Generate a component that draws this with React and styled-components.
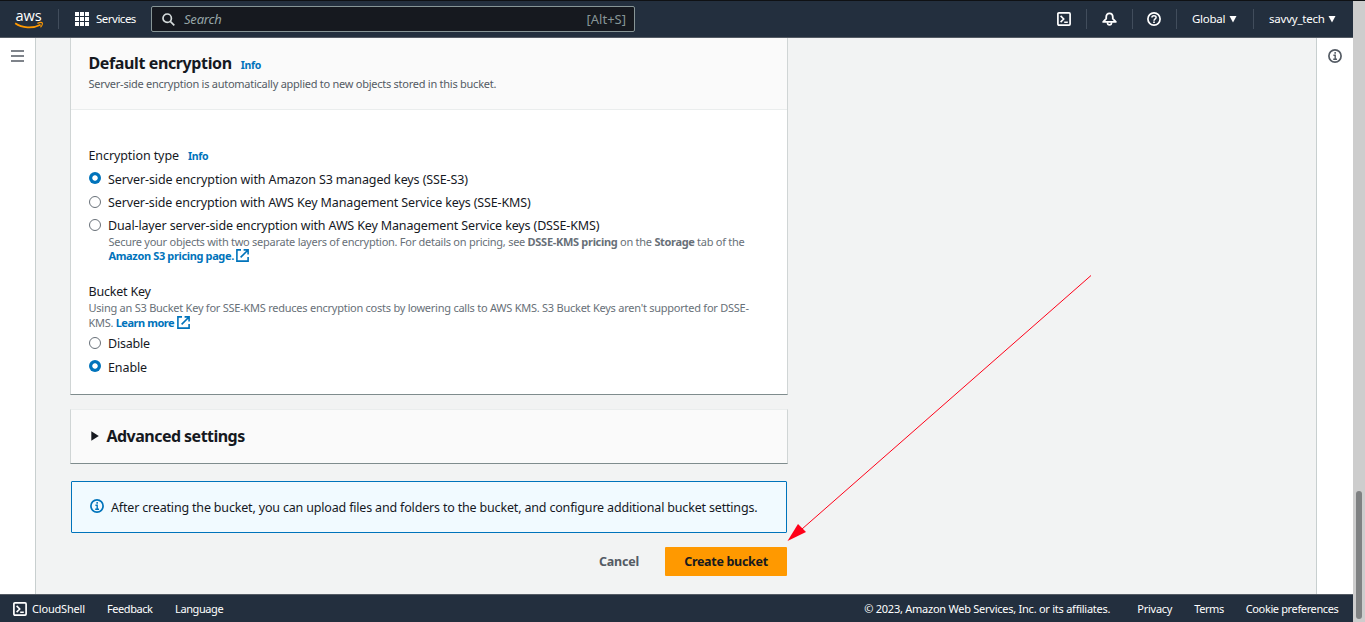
import React from "react";
import styled, { createGlobalStyle, css } from "styled-components";

const GlobalStyle = createGlobalStyle`
  *, *::before, *::after { box-sizing: border-box; }
  html, body { margin: 0; padding: 0; overflow: hidden; }
  body {
    font-family: "Noto Sans", "Open Sans", sans-serif;
    font-size: 12.5px;
    color: #16191f;
    background: #f2f3f3;
  }
  svg { display: block; flex: none; }
`;

const tracked = css`
  letter-spacing: ${(p) => p.$track || 0}px;
  white-space: nowrap;
`;

const Window = styled.div`
  position: relative;
  display: grid;
  grid-template-columns: 1353px 12px;
  width: 1365px;
  height: 622px;
  border-top: 1px solid #0f1114;
  overflow: hidden;
`;

const Page = styled.div`
  display: grid;
  grid-template-rows: 37px 556px 28px;
`;

const ScrollTrack = styled.div`
  display: flex;
  justify-content: center;
  align-items: flex-end;
  padding-bottom: 3px;
  background: #cdcdcd;
`;

const ScrollThumb = styled.div`
  width: 6px;
  height: 128px;
  border-radius: 3px;
  background: #7f8182;
`;

const TopBar = styled.header`
  display: flex;
  align-items: center;
  background: #232f3e;
  border-bottom: 1px solid #545b64;
  color: #fff;
`;

const LogoLink = styled.div`
  width: 58px;
  padding-left: 14px;
`;

const Divider = styled.div`
  width: 1px;
  height: 20px;
  background: #414d5c;
`;

const ServicesButton = styled.div`
  display: flex;
  align-items: center;
  gap: 7px;
  width: 92px;
  padding-left: 16px;
`;

const NavText = styled.span`
  ${tracked}
  font-size: 11.5px;
  line-height: 16px;
  color: #fff;
`;

const FooterText = styled(NavText)`
  font-size: 11px;
`;

const SearchBox = styled.div`
  display: flex;
  align-items: center;
  width: 484px;
  height: 26px;
  padding: 0 8px 0 10px;
  border: 1px solid #879596;
  border-radius: 2px;
  background: #16191f;
  color: #95a5a6;
`;

const SearchHint = styled.span`
  ${tracked}
  flex: 1;
  padding-left: 9px;
  font-style: italic;
  font-size: 13px;
`;

const Shortcut = styled.span`
  ${tracked}
  font-size: 13px;
  color: #879596;
`;

const TopActions = styled.div`
  display: flex;
  align-items: center;
  margin-left: auto;
`;

const IconCell = styled.div`
  display: flex;
  justify-content: center;
  width: ${(p) => p.$width}px;
  padding-right: ${(p) => p.$nudge || 0}px;
`;

const MenuButton = styled.div`
  display: flex;
  align-items: center;
  justify-content: space-between;
  width: ${(p) => p.$width}px;
  padding: 0 ${(p) => p.$right}px 0 15px;
`;

const Body = styled.div`
  display: grid;
  grid-template-columns: 36px 1fr 37px;
  background: #f2f3f3;
`;

const Rail = styled.aside`
  background: #fff;
  display: flex;
  justify-content: center;
  padding-top: ${(p) => (p.$side === "left" ? 12 : 11)}px;
  border-${(p) => (p.$side === "left" ? "right" : "left")}: 1px solid #c8cfcf;
`;

const Content = styled.main`
  width: 752px;
  padding-left: 34px;
`;

const Panel = styled.section`
  border: 1px solid #d0d5d5;
  border-bottom-color: #7f8c8d;
  background: #fff;
`;

const EncryptionPanel = styled(Panel)`
  height: 357px;
  border-top: 0;
`;

const PanelHeader = styled.div`
  height: 72px;
  padding: 13px 17px 0 17.5px;
  background: #fafafa;
  border-bottom: 1px solid #eaeded;
`;

const HeadingRow = styled.div`
  display: flex;
  align-items: baseline;
  gap: ${(p) => p.$gap}px;
`;

const Heading = styled.h2`
  ${tracked}
  margin: 0;
  font-size: 16px;
  line-height: 24px;
  font-weight: 700;
`;

const InfoLink = styled.a`
  ${tracked}
  font-size: 10.5px;
  font-weight: 700;
  color: #0073bb;
`;

const Hint = styled.div`
  ${tracked}
  font-size: 11px;
  line-height: ${(p) => p.$line || 15}px;
  color: ${(p) => (p.$dark ? "#545b64" : "#687078")};
`;

const Line = styled.span`
  ${tracked}
  display: flex;
  align-items: center;
  height: ${(p) => p.$height || 15}px;
  white-space: pre;
`;

const Strong = styled.b`
  ${tracked}
  font-weight: 700;
  white-space: pre;
  color: ${(p) => (p.$link ? "#0073bb" : "inherit")};
`;

const PanelBody = styled.div`
  padding: 37px 17px 0 17.5px;
`;

const FieldLabel = styled.span`
  ${tracked}
  display: block;
  line-height: 18px;
`;

const Field = styled.div`
  margin-top: ${(p) => p.$top || 0}px;
`;

const BucketKeyHint = styled(Hint)`
  margin: -1px 0 1px;
`;

const Option = styled.div`
  display: flex;
  align-items: center;
  gap: 7px;
  height: ${(p) => p.$height || 23}px;
`;

const OptionText = styled.span`
  ${tracked}
  line-height: 18px;
`;

const Radio = styled.span`
  flex: none;
  width: 12px;
  height: 12px;
  margin: 0 0 ${(p) => (p.$checked ? 3 : 1)}px 0.5px;
  border-radius: 50%;
  border: ${(p) => (p.$checked ? "0" : "1px solid #687078")};
  background: ${(p) => (p.$checked ? "radial-gradient(circle, #fff 2.3px, #0073bb 3.1px)" : "#fff")};
`;

const OptionNote = styled.div`
  margin-top: -3px;
  padding-left: 20px;
`;

const AdvancedPanel = styled(Panel)`
  display: flex;
  align-items: center;
  gap: 8px;
  height: 55px;
  margin-top: 14px;
  padding: 0 0 2px 19.5px;
  border-top-color: #eaeded;
  background: #fafafa;
`;

const Alert = styled.div`
  display: flex;
  align-items: flex-start;
  gap: 7px;
  width: 716px;
  height: 52px;
  margin: 17px 0 0 1px;
  padding: 17px 0 0 18px;
  border: 1px solid #0073bb;
  border-radius: 1px;
  background: #f1faff;
`;

const Actions = styled.div`
  display: flex;
  justify-content: flex-end;
  align-items: center;
  gap: 26px;
  width: 717px;
  margin-top: 14px;
`;

const CancelButton = styled.span`
  ${tracked}
  font-weight: 700;
  color: #545b64;
`;

const PrimaryButton = styled.span`
  ${tracked}
  display: flex;
  align-items: center;
  justify-content: center;
  width: 122px;
  height: 29px;
  border-radius: 1px;
  background: #ff9900;
  font-weight: 700;
`;

const Footer = styled.footer`
  display: flex;
  align-items: center;
  padding: 0 14.5px 0 13px;
  background: #232f3e;
  border-top: 1px solid #545b64;
`;

const FooterGroup = styled.div`
  display: flex;
  align-items: center;
  gap: ${(p) => p.$gap}px;
  margin-left: ${(p) => (p.$end ? "auto" : `${p.$left || 0}px`)};
`;

const Copyright = styled(FooterText)`
  margin-right: 5px;
`;

const PointerArrow = styled.svg`
  position: absolute;
  left: 780px;
  top: 269px;
`;

const AwsLogo = () => (
  <svg width="30" height="28" viewBox="0 -6 30 28">
    <text x="1.4" y="9.7" textLength="26.4" lengthAdjust="spacingAndGlyphs" fontFamily="Open Sans, sans-serif" fontSize="15" fontWeight="500" fill="#fff">aws</text>
    <path d="M1.2 12.3C8 17.3 19 17.7 26.6 13.8" fill="none" stroke="#f90" strokeWidth="1.7" />
    <path d="M23.4 12.4C25.6 11.5 28 11.5 28.3 12C28.7 12.9 27.7 15.2 26.5 16.3" fill="none" stroke="#f90" strokeWidth="1.2" />
  </svg>
);

const GridIcon = () => (
  <svg width="14" height="14" fill="#fff">
    {[0, 5, 10].map((y) => [0, 5, 10].map((x) => <rect key={`${x}-${y}`} x={x} y={y} width="4" height="4" />))}
  </svg>
);

const SearchIcon = () => (
  <svg width="13" height="13" fill="none" stroke="#d5dbdb" strokeWidth="1.7">
    <circle cx="5.2" cy="5.2" r="4.2" />
    <path d="M8.3 8.3L12.3 12.3" />
  </svg>
);

const ShellIcon = () => (
  <svg width="14" height="14" fill="none" stroke="#fff" strokeWidth="1.7">
    <rect x=".9" y=".9" width="12.2" height="12.2" rx="1" />
    <path d="M3.6 3.9L6.7 7L3.6 10.1M7.2 10.2H10.8" strokeWidth="1.6" />
  </svg>
);

const BellIcon = () => (
  <svg width="15" height="14" fill="none" stroke="#fff" strokeWidth="1.8" strokeLinejoin="round">
    <path d="M1.2 9.9L4.2 6.7V5.2C4.2 2.6 5.5 1.3 7.5 1.3S10.8 2.6 10.8 5.2V6.7L13.8 9.9Z" />
    <path d="M5.4 10.2C5.4 13.8 9.6 13.8 9.6 10.2" strokeWidth="1.6" />
  </svg>
);

const HelpIcon = () => (
  <svg width="14" height="14" fill="none" stroke="#fff" strokeWidth="1.7">
    <circle cx="7" cy="7" r="6.1" />
    <path d="M4.9 5.6C4.9 3 9.1 3 9.1 5.5C9.1 6.8 7 6.9 7 8.7" strokeWidth="1.5" />
    <path d="M7 9.6V11.1" />
  </svg>
);

const Caret = () => (
  <svg width="8" height="7" fill="#fff"><path d="M0.5 0H7.5L4 6.5Z" /></svg>
);

const MenuIcon = () => (
  <svg width="13" height="12" fill="#545b64">
    <path d="M0 0.2H13V1.8H0ZM0 5.2H13V6.8H0ZM0 10.2H13V11.8H0Z" />
  </svg>
);

const InfoIcon = ({ color }) => (
  <svg width="14" height="14" fill="none" stroke={color} strokeWidth="1.7">
    <circle cx="7" cy="7" r="6.1" />
    <path d="M5.4 6.2H7.2V10.1M5.2 10.2H9" strokeWidth="1.4" />
    <path d="M6.4 3.1H7.9V4.7H6.4Z" fill={color} stroke="none" />
  </svg>
);

const ExternalIcon = () => (
  <svg width="13" height="13" fill="none" stroke="#0073bb" strokeWidth="1.6">
    <path d="M5 .9H.9V12.1H12.1V8M7.6 .9H12.1V5.4M12 1L4.6 8.4" />
  </svg>
);

const Expander = () => (
  <svg width="8" height="10" fill="#16191f"><path d="M0.3 0.3L7.8 5L0.3 9.7Z" /></svg>
);

const RadioOption = ({ checked, height, track, children }) => (
  <Option $height={height}>
    <Radio $checked={checked} />
    <OptionText $track={track}>{children}</OptionText>
  </Option>
);

export default function App() {
  return (
    <Window>
      <GlobalStyle />
      <Page>
        <TopBar>
          <LogoLink><AwsLogo /></LogoLink>
          <Divider />
          <ServicesButton><GridIcon /><NavText $track={-0.5}>Services</NavText></ServicesButton>
          <SearchBox>
            <SearchIcon />
            <SearchHint $track={-0.2}>Search</SearchHint>
            <Shortcut>[Alt+S]</Shortcut>
          </SearchBox>
          <TopActions>
            <IconCell $width={44}><ShellIcon /></IconCell>
            <Divider />
            <IconCell $width={45} $nudge={1}><BellIcon /></IconCell>
            <Divider />
            <IconCell $width={43} $nudge={1}><HelpIcon /></IconCell>
            <Divider />
            <MenuButton $width={76} $right={16}><NavText $track={-0.25}>Global</NavText><Caret /></MenuButton>
            <Divider />
            <MenuButton $width={99} $right={17}><NavText $track={-0.22}>savvy_tech</NavText><Caret /></MenuButton>
          </TopActions>
        </TopBar>
        <Body>
          <Rail $side="left"><MenuIcon /></Rail>
          <Content>
            <EncryptionPanel>
              <PanelHeader>
                <HeadingRow $gap={9}>
                  <Heading $track={-0.38}>Default encryption</Heading>
                  <InfoLink $track={-0.35}>Info</InfoLink>
                </HeadingRow>
                <Hint $dark $line={18} $track={-0.255}>Server-side encryption is automatically applied to new objects stored in this bucket.</Hint>
              </PanelHeader>
              <PanelBody>
                <HeadingRow $gap={9}>
                  <FieldLabel $track={-0.09}>Encryption type</FieldLabel>
                  <InfoLink $track={-0.35}>Info</InfoLink>
                </HeadingRow>
                <Field $top={3}>
                  <RadioOption checked track={-0.11}>Server-side encryption with Amazon S3 managed keys (SSE-S3)</RadioOption>
                  <RadioOption track={-0.125}>Server-side encryption with AWS Key Management Service keys (SSE-KMS)</RadioOption>
                  <RadioOption track={-0.14}>Dual-layer server-side encryption with AWS Key Management Service keys (DSSE-KMS)</RadioOption>
                  <OptionNote>
                    <Hint>
                      <Line $height={14} $track={-0.265}>Secure your objects with two separate layers of encryption. For details on pricing, see <Strong $track={-0.3}>DSSE-KMS pricing</Strong> on the <Strong $track={-0.35}>Storage</Strong> tab of the</Line>
                      <Line $height={14}><Strong $link $track={-0.36}>Amazon S3 pricing page. </Strong><ExternalIcon /></Line>
                    </Hint>
                  </OptionNote>
                </Field>
                <Field $top={21}>
                  <FieldLabel $track={-0.2}>Bucket Key</FieldLabel>
                  <BucketKeyHint>
                    <Line $track={-0.245}>Using an S3 Bucket Key for SSE-KMS reduces encryption costs by lowering calls to AWS KMS. S3 Bucket Keys aren't supported for DSSE-</Line>
                    <Line $track={-0.3}>KMS. <Strong $link $track={-0.45}>Learn more </Strong><ExternalIcon /></Line>
                  </BucketKeyHint>
                  <RadioOption height={25} track={-0.2}>Disable</RadioOption>
                  <RadioOption checked height={23} track={-0.1}>Enable</RadioOption>
                </Field>
              </PanelBody>
            </EncryptionPanel>
            <AdvancedPanel>
              <Expander />
              <Heading $track={-0.53}>Advanced settings</Heading>
            </AdvancedPanel>
            <Alert>
              <InfoIcon color="#0073bb" />
              <OptionText $track={-0.175}>After creating the bucket, you can upload files and folders to the bucket, and configure additional bucket settings.</OptionText>
            </Alert>
            <Actions>
              <CancelButton $track={-0.2}>Cancel</CancelButton>
              <PrimaryButton $track={-0.3}>Create bucket</PrimaryButton>
            </Actions>
          </Content>
          <Rail $side="right"><InfoIcon color="#545b64" /></Rail>
        </Body>
        <Footer>
          <FooterGroup $gap={5}><ShellIcon /><FooterText $track={-0.18}>CloudShell</FooterText></FooterGroup>
          <FooterGroup $gap={22.5} $left={22}>
            <FooterText $track={-0.42}>Feedback</FooterText>
            <FooterText $track={-0.41}>Language</FooterText>
          </FooterGroup>
          <FooterGroup $gap={22} $end>
            <Copyright $track={-0.25}>© 2023, Amazon Web Services, Inc. or its affiliates.</Copyright>
            <FooterText $track={-0.25}>Privacy</FooterText>
            <FooterText $track={-0.42}>Terms</FooterText>
            <FooterText $track={-0.37}>Cookie preferences</FooterText>
          </FooterGroup>
        </Footer>
      </Page>
      <ScrollTrack><ScrollThumb /></ScrollTrack>
      <PointerArrow width="320" height="280">
        <path d="M311 5.5L22 259" stroke="#ff0018" strokeWidth="1" />
        <path d="M7.5 271L18 254L26 262Z" fill="#ff0018" />
      </PointerArrow>
    </Window>
  );
}
